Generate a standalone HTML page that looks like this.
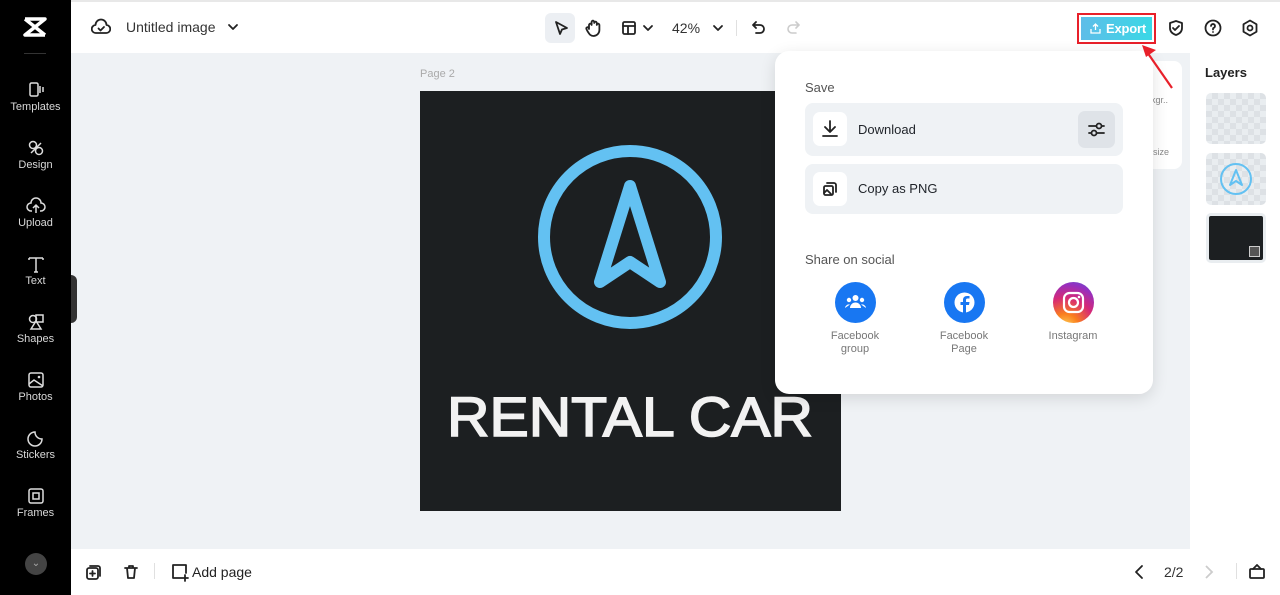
<!DOCTYPE html>
<html><head><meta charset="utf-8"><style>
*{margin:0;padding:0;box-sizing:border-box}
body{width:1280px;height:595px;overflow:hidden;font-family:"Liberation Sans",sans-serif;background:#eff2f5;position:relative;color:#1f2329}
.abs{position:absolute}
#side{left:0;top:0;width:71px;height:595px;background:#000}
.si{position:absolute;left:0;width:71px;text-align:center;color:#d8d8d8;font-size:11px}
.si svg{display:block;margin:0 auto 2px}
#top{left:71px;top:0;width:1209px;height:53px;background:#fff;border-top:2px solid #e8e8e8}
#bot{left:71px;top:549px;width:1209px;height:46px;background:#fff}
#layers{left:1190px;top:53px;width:90px;height:496px;background:#fff}
.ic{stroke:#222;fill:none;stroke-width:1.8;stroke-linecap:round;stroke-linejoin:round}
#pop{left:775px;top:51px;width:378px;height:343px;background:#fff;border-radius:14px;box-shadow:0 4px 16px rgba(0,0,0,.12)}
.row{position:absolute;left:30px;width:318px;background:#eff2f5;border-radius:8px}
.row .b{position:absolute;left:8px;width:34px;height:34px;background:#fff;border-radius:7px}
.row span{position:absolute;left:53px;font-size:13px;color:#1f2329}
.soc{position:absolute;width:80px;text-align:center;font-size:11px;color:#777;line-height:13px}
.soc .c{width:41px;height:41px;border-radius:50%;margin:0 auto 7px}
.chk{background-color:#e9edf0;background-image:linear-gradient(45deg,#dde1e5 25%,transparent 25%,transparent 75%,#dde1e5 75%),linear-gradient(45deg,#dde1e5 25%,transparent 25%,transparent 75%,#dde1e5 75%);background-size:12px 12px;background-position:0 0,6px 6px}
</style></head><body>
<div id="side" class="abs">
 <svg class="abs" style="left:23px;top:17px" width="24" height="20" viewBox="0 0 24 20"><path d="M2 2h20L2 18h20M2 2l20 16" stroke="#fff" stroke-width="3.5" fill="none" stroke-linejoin="round"/></svg>
 <div class="abs" style="left:24px;top:53px;width:22px;height:1px;background:#333"></div>
 <div class="si" style="top:81px"><svg width="20" height="18" viewBox="0 0 20 18"><rect x="4" y="2" width="8" height="13" rx="1.5" stroke="#ddd" fill="none" stroke-width="1.5"/><path d="M14 5v7M17 6v5" stroke="#ddd" stroke-width="1.5"/></svg>Templates</div>
 <div class="si" style="top:139px"><svg width="20" height="18" viewBox="0 0 20 18"><circle cx="7" cy="6" r="3.5" stroke="#ddd" fill="none" stroke-width="1.5"/><circle cx="13" cy="12" r="3.5" stroke="#ddd" fill="none" stroke-width="1.5"/><path d="M5 14l10-10" stroke="#ddd" stroke-width="1.5"/></svg>Design</div>
 <div class="si" style="top:197px"><svg width="20" height="18" viewBox="0 0 20 18"><path d="M6 14H5a4 4 0 0 1 0-8 5 5 0 0 1 10 0 4 4 0 0 1 0 8h-1M10 16V9M7 11l3-3 3 3" stroke="#ddd" fill="none" stroke-width="1.5"/></svg>Upload</div>
 <div class="si" style="top:255px"><svg width="20" height="18" viewBox="0 0 20 18"><path d="M3 3h14M10 3v14M3 3v2M17 3v2M8 17h4" stroke="#ddd" fill="none" stroke-width="1.5"/></svg>Text</div>
 <div class="si" style="top:313px"><svg width="20" height="18" viewBox="0 0 20 18"><path d="M10 8l5 8H5z" stroke="#ddd" fill="none" stroke-width="1.5"/><circle cx="7" cy="6" r="3.5" stroke="#ddd" fill="none" stroke-width="1.5"/><rect x="10" y="2" width="7" height="7" stroke="#ddd" fill="none" stroke-width="1.5"/></svg>Shapes</div>
 <div class="si" style="top:371px"><svg width="20" height="18" viewBox="0 0 20 18"><rect x="3" y="2" width="14" height="14" rx="2" stroke="#ddd" fill="none" stroke-width="1.5"/><path d="M3 13l5-4 9 6" stroke="#ddd" fill="none" stroke-width="1.5"/><circle cx="13" cy="6" r="1.3" fill="#ddd"/></svg>Photos</div>
 <div class="si" style="top:429px"><svg width="20" height="18" viewBox="0 0 20 18"><path d="M16 10a7 7 0 1 1-7-7c0 4 3 7 7 7z" stroke="#ddd" fill="none" stroke-width="1.5"/></svg>Stickers</div>
 <div class="si" style="top:487px"><svg width="20" height="18" viewBox="0 0 20 18"><rect x="3" y="2" width="14" height="14" rx="2" stroke="#ddd" fill="none" stroke-width="1.5"/><rect x="7" y="6" width="6" height="6" stroke="#ddd" fill="none" stroke-width="1.5"/></svg>Frames</div>
 <div class="abs" style="left:25px;top:553px;width:22px;height:22px;border-radius:50%;background:#444;color:#aaa;font-size:10px;text-align:center;line-height:22px">⌄</div>
 <div class="abs" style="left:71px;top:275px;width:6px;height:48px;background:#333;border-radius:0 6px 6px 0"></div>
</div>

<div id="top" class="abs">
 <svg class="abs" style="left:20px;top:16px" width="20" height="18" viewBox="0 0 20 18"><path class="ic" d="M5 15a4 4 0 0 1-.5-8 5.5 5.5 0 0 1 11 0 4 4 0 0 1-.5 8z"/><path class="ic" d="M7.5 10.5l2 2 3.5-3.5"/></svg>
 <div class="abs" style="left:55px;top:17px;font-size:14px;color:#333">Untitled image</div>
 <svg class="abs" style="left:156px;top:20px" width="12" height="10"><path class="ic" d="M2 3l4 4 4-4"/></svg>
 <div class="abs" style="left:474px;top:11px;width:30px;height:30px;background:#eceff3;border-radius:6px"></div>
 <svg class="abs" style="left:481px;top:17px" width="18" height="18"><path class="ic" d="M4 3l11 6-5 1.5L8 15z"/></svg>
 <svg class="abs" style="left:512px;top:16px" width="20" height="20"><path class="ic" d="M6 11V7a1.3 1.3 0 0 1 2.6 0V4a1.3 1.3 0 0 1 2.6 0v1a1.3 1.3 0 0 1 2.6 0v2a1.3 1.3 0 0 1 2.6 0v5a6 6 0 0 1-6 6c-3 0-4-2-6-5l-1-2a1.3 1.3 0 0 1 2.2-1.3z"/></svg>
 <svg class="abs" style="left:550px;top:18px" width="16" height="16"><rect class="ic" x="2" y="2" width="12" height="12" rx="1.5"/><path class="ic" d="M2 6h12M7 6v8"/></svg>
 <svg class="abs" style="left:571px;top:21px" width="12" height="10"><path class="ic" d="M2 3l4 4 4-4"/></svg>
 <div class="abs" style="left:601px;top:18px;font-size:14px;color:#333">42%</div>
 <svg class="abs" style="left:641px;top:21px" width="12" height="10"><path class="ic" d="M2 3l4 4 4-4"/></svg>
 <div class="abs" style="left:665px;top:18px;width:1px;height:16px;background:#e0e0e0"></div>
 <svg class="abs" style="left:679px;top:17px" width="18" height="18"><path class="ic" d="M6 3L3 6l3 3M3 6h7a4 4 0 0 1 0 8H6"/></svg>
 <svg class="abs" style="left:713px;top:17px" width="18" height="18"><path d="M12 3l3 3-3 3M15 6H8a4 4 0 0 0 0 8h4" stroke="#ccc" fill="none" stroke-width="1.6" stroke-linecap="round"/></svg>
 <div class="abs" style="left:1006px;top:11px;width:79px;height:31px;border:2px solid #e8202a;padding:2px"><div style="width:100%;height:100%;background:linear-gradient(90deg,#5ebde8,#3ad8e6);color:#fff;font-weight:bold;font-size:13px;line-height:23px;padding-left:25px;position:relative;letter-spacing:-0.2px">Export<svg style="position:absolute;left:8px;top:5px" width="13" height="13"><path d="M6.5 8V2M4 4.5l2.5-2.5L9 4.5M2 7v4h9V7" stroke="#fff" fill="none" stroke-width="1.3"/></svg></div></div>
 <svg class="abs" style="left:1096px;top:17px" width="18" height="18"><path class="ic" d="M9 2l6 2v5c0 4-3 6-6 7-3-1-6-3-6-7V4z"/><path class="ic" d="M6 9l2 2 4-4"/></svg>
 <svg class="abs" style="left:1133px;top:17px" width="18" height="18"><circle class="ic" cx="9" cy="9" r="7.5"/><path class="ic" d="M7 7a2 2 0 1 1 2.5 2c-.5.2-.5.6-.5 1.5"/><circle cx="9" cy="13" r=".9" fill="#222"/></svg>
 <svg class="abs" style="left:1170px;top:17px" width="18" height="18"><path class="ic" d="M9 1.5l6.5 3.75v7.5L9 16.5l-6.5-3.75v-7.5z"/><circle class="ic" cx="9" cy="9" r="2.5"/></svg>
</div>

<div class="abs" style="left:420px;top:68px;font-size:11px;color:#aaa">Page 2</div>
<svg class="abs" style="left:420px;top:91px" width="421" height="420" viewBox="0 0 421 420">
 <rect width="421" height="420" fill="#1c1f21"/>
 <circle cx="210" cy="146" r="86" stroke="#63c1f2" stroke-width="12" fill="none"/>
 <path d="M210 95L180 191L210 171L240 191Z" stroke="#63c1f2" stroke-width="12" fill="none" stroke-linejoin="round"/>
 <text x="27" y="345" font-family="Liberation Sans" font-size="56" fill="#f2f2f2" stroke="#f2f2f2" stroke-width="1.6" textLength="366" lengthAdjust="spacingAndGlyphs">RENTAL CAR</text>
</svg>

<div class="abs" style="left:1143px;top:61px;width:39px;height:108px;background:#fff;border-radius:0 8px 8px 0;font-size:9px;color:#888">
 <div style="position:absolute;left:8px;top:34px">kgr..</div><div style="position:absolute;left:10px;top:86px">size</div>
</div>

<div id="layers" class="abs">
 <div class="abs" style="left:15px;top:12px;font-size:13px;font-weight:bold;color:#222">Layers</div>
 <div class="abs chk" style="left:16px;top:40px;width:60px;height:51px;border-radius:5px"></div>
 <div class="abs chk" style="left:16px;top:100px;width:60px;height:52px;border-radius:5px"><svg width="60" height="52"><circle cx="30" cy="26" r="15" stroke="#63c1f2" stroke-width="2" fill="none"/><path d="M30 17l-6 15 6-4 6 4z" stroke="#63c1f2" stroke-width="2" fill="none" stroke-linejoin="round"/></svg></div>
 <div class="abs" style="left:16px;top:160px;width:60px;height:50px;border-radius:5px;border:3px solid #e9edf0;background:#1c1f21"><div style="position:absolute;right:3px;bottom:3px;width:11px;height:11px;border:1.5px solid #ccc;background:#555"></div></div>
</div>

<div id="bot" class="abs">
 <svg class="abs" style="left:14px;top:14px" width="18" height="18"><rect class="ic" x="2" y="5" width="11" height="11" rx="2"/><path class="ic" d="M5 3h8a2 2 0 0 1 2 2v8M7.5 8v5M5 10.5h5"/></svg>
 <svg class="abs" style="left:51px;top:14px" width="18" height="18"><path class="ic" d="M3 5h12M7 5V3h4v2M5 5l1 10h6l1-10"/></svg>
 <div class="abs" style="left:83px;top:14px;width:1px;height:16px;background:#e0e0e0"></div>
 <svg class="abs" style="left:99px;top:13px" width="20" height="20"><path class="ic" d="M12 16H3V3h13v8M15 13v6M12 16h6"/></svg>
 <div class="abs" style="left:121px;top:15px;font-size:14px;color:#222">Add page</div>
 <svg class="abs" style="left:1061px;top:15px" width="14" height="16"><path class="ic" d="M10 2L4 8l6 6"/></svg>
 <div class="abs" style="left:1093px;top:15px;font-size:14px;color:#333">2/2</div>
 <svg class="abs" style="left:1131px;top:15px" width="14" height="16"><path d="M4 2l6 6-6 6" stroke="#ccc" fill="none" stroke-width="1.8"/></svg>
 <div class="abs" style="left:1165px;top:14px;width:1px;height:16px;background:#e0e0e0"></div>
 <svg class="abs" style="left:1177px;top:13px" width="18" height="18"><rect class="ic" x="2" y="7" width="14" height="9" rx="1"/><path class="ic" d="M5 7l4-4 4 4"/></svg>
</div>

<div id="pop" class="abs">
 <div class="abs" style="left:30px;top:29px;font-size:13px;color:#555">Save</div>
 <div class="row" style="top:52px;height:53px"><div class="b" style="top:9px"><svg width="34" height="34"><path class="ic" d="M17 9v11M12 15l5 5 5-5M10 24h14"/></svg></div><span style="top:19px">Download</span>
  <div style="position:absolute;right:8px;top:8px;width:37px;height:37px;background:#dfe3e8;border-radius:7px"><svg width="37" height="37"><path class="ic" d="M11 15h15M11 22h15"/><circle cx="21" cy="15" r="2.5" fill="#dfe3e8" stroke="#222" stroke-width="1.8"/><circle cx="16" cy="22" r="2.5" fill="#dfe3e8" stroke="#222" stroke-width="1.8"/></svg></div></div>
 <div class="row" style="top:113px;height:50px"><div class="b" style="top:8px"><svg width="34" height="34"><rect class="ic" x="11" y="14" width="9" height="9" rx="1.5"/><path class="ic" d="M14 11h7a2 2 0 0 1 2 2v7M11 21l3-3 4 4"/></svg></div><span style="top:17px">Copy as PNG</span></div>
 <div class="abs" style="left:30px;top:201px;font-size:13px;color:#555">Share on social</div>
 <div class="soc" style="left:40px;top:231px"><div class="c" style="background:#1877f2"><svg width="41" height="41"><circle cx="20.5" cy="16" r="3" fill="#fff"/><circle cx="14" cy="18" r="2.2" fill="#fff"/><circle cx="27" cy="18" r="2.2" fill="#fff"/><path d="M15 26a5.5 5.5 0 0 1 11 0z M10 26a4 4 0 0 1 5-3.5M31 26a4 4 0 0 0-5-3.5" fill="#fff"/></svg></div>Facebook<br>group</div>
 <div class="soc" style="left:149px;top:231px"><div class="c" style="background:#1877f2"><svg width="41" height="41"><circle cx="20.5" cy="20.5" r="10" fill="#fff"/><path d="M22 31v-8h3l.5-3H22v-2c0-1 .5-1.5 1.5-1.5H25.5V14h-2.5c-2.5 0-4 1.5-4 4v2h-2.5v3H19v8z" fill="#1877f2"/></svg></div>Facebook<br>Page</div>
 <div class="soc" style="left:258px;top:231px"><div class="c" style="background:radial-gradient(circle at 30% 110%,#fdd65a 0%,#fa7e1e 25%,#d62976 55%,#962fbf 80%,#4f5bd5 100%)"><svg width="41" height="41"><rect x="11" y="11" width="19" height="19" rx="5.5" stroke="#fff" stroke-width="2.2" fill="none"/><circle cx="20.5" cy="20.5" r="4.5" stroke="#fff" stroke-width="2.2" fill="none"/><circle cx="26" cy="15" r="1.3" fill="#fff"/></svg></div>Instagram</div>
</div>
<svg class="abs" style="left:1138px;top:42px" width="40" height="50"><path d="M34 46L9 10" stroke="#e8202a" stroke-width="2.2"/><path d="M4 3l14 5-10 7z" fill="#e8202a"/></svg>
</body></html>
